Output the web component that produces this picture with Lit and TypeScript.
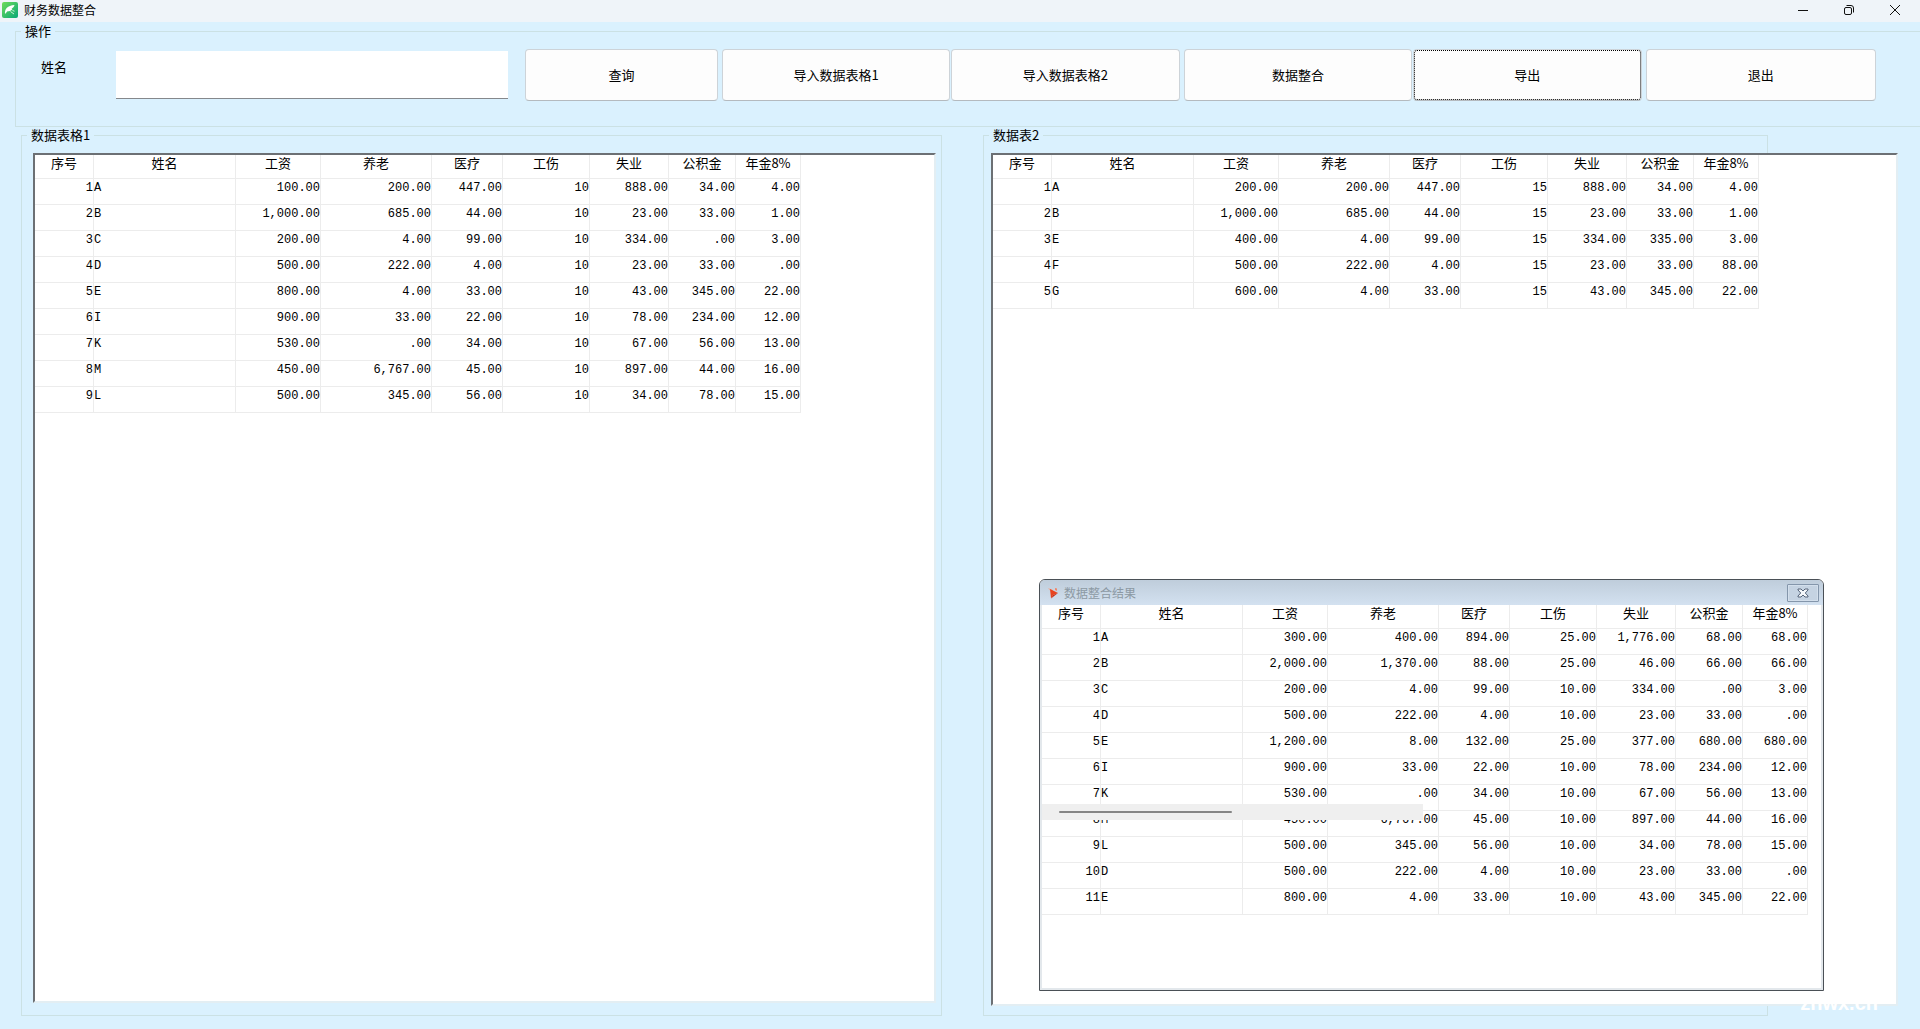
import { LitElement, html, css, svg } from "lit";
import { customElement, property } from "lit/decorators.js";

type Row = string[];

const HEADERS = ["序号", "姓名", "工资", "养老", "医疗", "工伤", "失业", "公积金", "年金8%"];

const SHEET_ONE: Row[] = [
  ["1", "A", "100.00", "200.00", "447.00", "10", "888.00", "34.00", "4.00"],
  ["2", "B", "1,000.00", "685.00", "44.00", "10", "23.00", "33.00", "1.00"],
  ["3", "C", "200.00", "4.00", "99.00", "10", "334.00", ".00", "3.00"],
  ["4", "D", "500.00", "222.00", "4.00", "10", "23.00", "33.00", ".00"],
  ["5", "E", "800.00", "4.00", "33.00", "10", "43.00", "345.00", "22.00"],
  ["6", "I", "900.00", "33.00", "22.00", "10", "78.00", "234.00", "12.00"],
  ["7", "K", "530.00", ".00", "34.00", "10", "67.00", "56.00", "13.00"],
  ["8", "M", "450.00", "6,767.00", "45.00", "10", "897.00", "44.00", "16.00"],
  ["9", "L", "500.00", "345.00", "56.00", "10", "34.00", "78.00", "15.00"],
];

const SHEET_TWO: Row[] = [
  ["1", "A", "200.00", "200.00", "447.00", "15", "888.00", "34.00", "4.00"],
  ["2", "B", "1,000.00", "685.00", "44.00", "15", "23.00", "33.00", "1.00"],
  ["3", "E", "400.00", "4.00", "99.00", "15", "334.00", "335.00", "3.00"],
  ["4", "F", "500.00", "222.00", "4.00", "15", "23.00", "33.00", "88.00"],
  ["5", "G", "600.00", "4.00", "33.00", "15", "43.00", "345.00", "22.00"],
];

const MERGED: Row[] = [
  ["1", "A", "300.00", "400.00", "894.00", "25.00", "1,776.00", "68.00", "68.00"],
  ["2", "B", "2,000.00", "1,370.00", "88.00", "25.00", "46.00", "66.00", "66.00"],
  ["3", "C", "200.00", "4.00", "99.00", "10.00", "334.00", ".00", "3.00"],
  ["4", "D", "500.00", "222.00", "4.00", "10.00", "23.00", "33.00", ".00"],
  ["5", "E", "1,200.00", "8.00", "132.00", "25.00", "377.00", "680.00", "680.00"],
  ["6", "I", "900.00", "33.00", "22.00", "10.00", "78.00", "234.00", "12.00"],
  ["7", "K", "530.00", ".00", "34.00", "10.00", "67.00", "56.00", "13.00"],
  ["8", "M", "450.00", "6,767.00", "45.00", "10.00", "897.00", "44.00", "16.00"],
  ["9", "L", "500.00", "345.00", "56.00", "10.00", "34.00", "78.00", "15.00"],
  ["10", "D", "500.00", "222.00", "4.00", "10.00", "23.00", "33.00", ".00"],
  ["11", "E", "800.00", "4.00", "33.00", "10.00", "43.00", "345.00", "22.00"],
];

@customElement("salary-table")
export class SalaryTable extends LitElement {
  @property({ attribute: false }) rows: Row[] = [];

  static styles = css`
    :host {
      display: block;
    }
    .grid {
      table-layout: fixed;
      width: 766px;
      border-collapse: separate;
      border-spacing: 0;
      color: #000;
    }
    .c0 { width: 59px; }
    .c1 { width: 142px; }
    .c2 { width: 85px; }
    .c3 { width: 111px; }
    .c4 { width: 71px; }
    .c5 { width: 87px; }
    .c6 { width: 79px; }
    .c7 { width: 67px; }
    .c8 { width: 65px; }
    .head,
    .cell {
      box-sizing: border-box;
      padding: 0;
      border-right: 1px solid #ececec;
      border-bottom: 1px solid #ececec;
      vertical-align: top;
      white-space: nowrap;
    }
    .head {
      height: 24px;
      font: 400 13px / 16px "Noto Sans CJK SC", sans-serif;
      text-align: center;
    }
    .cell {
      height: 26px;
      font: 400 12px / 18px "Liberation Mono", monospace;
      text-align: right;
    }
    .name {
      text-align: left;
    }
  `;

  render() {
    return html`
      <table class="grid">
        <colgroup>
          ${HEADERS.map((_, i) => html`<col class="c${i}" />`)}
        </colgroup>
        <thead>
          <tr>
            ${HEADERS.map((h) => html`<th class="head" scope="col">${h}</th>`)}
          </tr>
        </thead>
        <tbody>
          ${this.rows.map(
            (row) => html`<tr>
              ${row.map((v, i) => html`<td class=${i === 1 ? "cell name" : "cell"}>${v}</td>`)}
            </tr>`
          )}
        </tbody>
      </table>
    `;
  }
}

const appIcon = svg`
  <defs>
    <linearGradient id="leaf" x1="0" y1="0" x2="1" y2="1">
      <stop offset="0" stop-color="#6fdc5a" />
      <stop offset="1" stop-color="#08a878" />
    </linearGradient>
  </defs>
  <rect x="0" y="0" width="16" height="16" rx="2" fill="url(#leaf)" />
  <path d="M3 12C2.500 7 5.500 3.500 12.500 3C12 5 11 6 9.500 6.500L10.500 7C9 9 7 9.300 5.500 9.300Z" fill="#fff" />
  <path d="M8.500 9.500L12 12M10.500 8.500L12.500 9.200" stroke="#c8f2da" stroke-width="1" fill="none" />`;

@customElement("app-root")
export class AppRoot extends LitElement {
  static styles = css`
    :host {
      position: relative;
      display: flex;
      flex-direction: column;
      box-sizing: border-box;
      min-height: 100vh;
      overflow: hidden;
      background: #daf1fe;
      color: #000;
      font: 400 13px / 18px "Noto Sans CJK SC", sans-serif;
    }
    .titlebar {
      display: flex;
      align-items: center;
      box-sizing: border-box;
      height: 22px;
      padding: 0 2px 2px;
      background: #eff4f9;
    }
    .title {
      flex: 1;
      margin: 0 0 0 6px;
      font-size: 12px;
      font-weight: 400;
      line-height: 20px;
    }
    .caption {
      display: grid;
      place-items: center;
      width: 46px;
      height: 20px;
      padding: 0;
      border: 0;
      background: none;
    }
    .icon {
      display: block;
    }
    .group {
      min-width: 0;
      margin: 0;
      padding: 0;
      border: 1px solid #cbe1e4;
    }
    .legend {
      padding: 0 4px;
      line-height: 18px;
    }
    .actions {
      margin: 0 -8px 0 15px;
      padding: 9px 51px 25px 25px;
    }
    .actions .legend {
      margin-left: -20px;
    }
    .toolbar {
      display: flex;
      align-items: center;
    }
    .label {
      flex: 0 0 75px;
      align-self: flex-start;
      line-height: 36px;
    }
    .field {
      flex: 392 1 0;
      min-width: 0;
      box-sizing: border-box;
      height: 48px;
      margin: 0 17px 0 0;
      padding: 0;
      border: 0;
      border-bottom: 1px solid #85888c;
      border-radius: 0;
      background: #fff;
      font: inherit;
      outline: none;
    }
    .buttons {
      flex: 1350 1 0;
      display: flex;
      gap: 4px;
    }
    .pair {
      flex: 459 1 0;
      display: flex;
      gap: 1px;
    }
    .btn {
      flex: 229 1 0;
      height: 52px;
      padding: 0;
      border: 1px solid #cdd3d8;
      border-bottom-color: #b4babf;
      border-radius: 4px;
      background: #fdfdfd;
      color: #000;
      font: inherit;
    }
    .search {
      flex-grow: 191;
    }
    .focused {
      outline: 1px dotted #000;
      outline-offset: -2px;
    }
    .panels {
      flex: 1;
      display: grid;
      grid-template-columns: 921fr 785fr;
      column-gap: 41px;
      margin: -1px 0 0;
      padding: 0 152px 13px 21px;
    }
    .panel {
      display: flex;
      flex-direction: column;
      padding: 9px 5px 12px 11px;
    }
    .panel .legend {
      margin-left: -6px;
    }
    .sheet {
      flex: 1;
      box-sizing: border-box;
      border: 2px solid #6c7074;
      border-right-color: #e3eef3;
      border-bottom-color: #e3eef3;
      background: #fff;
    }
    .wide {
      padding: 9px 5px 9px 7px;
    }
    .wide .legend {
      margin-left: -2px;
    }
    .wide .sheet {
      margin-right: -136px;
    }
    .dialog {
      position: absolute;
      right: 96px;
      bottom: 38px;
      box-sizing: border-box;
      width: 785px;
      height: 412px;
      border: 1px solid #4a5056;
      border-radius: 6px 6px 0 0;
      background: #fff;
      box-shadow: inset 0 0 0 2px #e3e8ec;
      overflow: hidden;
    }
    .dialog-bar {
      display: flex;
      align-items: center;
      box-sizing: border-box;
      height: 25px;
      padding: 0 4px 0 8px;
      background: linear-gradient(#bfcddb, #d3e1f0);
    }
    .dialog-title {
      flex: 1;
      margin: 0 0 0 5px;
      color: #8c99a3;
      font-size: 12px;
      font-weight: 400;
    }
    .dialog-close {
      display: grid;
      place-items: center;
      box-sizing: border-box;
      width: 32px;
      height: 18px;
      padding: 0;
      border: 1px solid #8496ab;
      border-radius: 1px;
      background: #c5d3e2;
      box-shadow: inset 0 0 0 1px #d3dfec;
    }
    .dialog-body {
      padding: 0 2px;
    }
    .scroll {
      position: absolute;
      left: 2px;
      top: 224px;
      box-sizing: border-box;
      width: 381px;
      height: 16px;
      padding: 7px 17px;
      background: #efefef;
    }
    .thumb {
      width: 173px;
      height: 2px;
      border-radius: 1px;
      background: #858585;
    }
    .mark {
      position: absolute;
      right: 42px;
      bottom: 15px;
      color: #fff;
      font: 700 20px / 22px "Liberation Sans", sans-serif;
    }
  `;

  render() {
    return html`
      <header class="titlebar">
        <svg class="icon" width="16" height="16" viewBox="0 0 16 16" aria-hidden="true">${appIcon}</svg>
        <h1 class="title">财务数据整合</h1>
        <button class="caption" aria-label="最小化">
          <svg class="icon" width="12" height="12" viewBox="0 0 12 12"><path d="M1 6.500H11" stroke="#111" fill="none" /></svg>
        </button>
        <button class="caption" aria-label="还原">
          <svg class="icon" width="12" height="12" viewBox="0 0 12 12" fill="none" stroke="#111">
            <rect x="1.500" y="3.500" width="7" height="7" rx="1.500" />
            <path d="M3.500 1.500H8Q10.500 1.500 10.500 4V8.500" />
          </svg>
        </button>
        <button class="caption" aria-label="关闭">
          <svg class="icon" width="12" height="12" viewBox="0 0 12 12"><path d="M1 1L11 11M11 1L1 11" stroke="#111" fill="none" /></svg>
        </button>
      </header>

      <fieldset class="group actions">
        <legend class="legend">操作</legend>
        <div class="toolbar">
          <label class="label" for="name">姓名</label>
          <input class="field" id="name" type="text" />
          <div class="buttons">
            <button class="btn search">查询</button>
            <div class="pair">
              <button class="btn">导入数据表格1</button>
              <button class="btn">导入数据表格2</button>
            </div>
            <div class="pair">
              <button class="btn">数据整合</button>
              <button class="btn focused">导出</button>
            </div>
            <button class="btn">退出</button>
          </div>
        </div>
      </fieldset>

      <main class="panels">
        <fieldset class="group panel">
          <legend class="legend">数据表格1</legend>
          <div class="sheet"><salary-table .rows=${SHEET_ONE}></salary-table></div>
        </fieldset>
        <fieldset class="group panel wide">
          <legend class="legend">数据表2</legend>
          <div class="sheet"><salary-table .rows=${SHEET_TWO}></salary-table></div>
        </fieldset>
      </main>

      <section class="dialog" role="dialog" aria-labelledby="result-title">
        <header class="dialog-bar">
          <svg class="icon" width="11" height="12" viewBox="0 0 11 12" aria-hidden="true">
            <path d="M0 1L5 3L4 6Z" fill="#f2a48c" />
            <path d="M2 2L10 6L5 8L3 11.500Z" fill="#e8431f" />
            <path d="M10 6L5 8L3 11.500Z" fill="#c92f14" />
            <path d="M7 1L9 1.500L9 4L7 3Z" fill="#f0866a" />
          </svg>
          <h2 class="dialog-title" id="result-title">数据整合结果</h2>
          <button class="dialog-close" aria-label="关闭">
            <svg class="icon" width="12" height="10" viewBox="0 0 12 10">
              <path d="M1 1H4L6 3L8 1H11V2L8.300 5L11 8V9H8L6 7L4 9H1V8L3.700 5L1 2Z" fill="#f4f7fa" stroke="#56657a" />
            </svg>
          </button>
        </header>
        <div class="dialog-body"><salary-table .rows=${MERGED}></salary-table></div>
        <div class="scroll"><div class="thumb"></div></div>
      </section>
      <span class="mark">znwx.cn</span>
    `;
  }
}
